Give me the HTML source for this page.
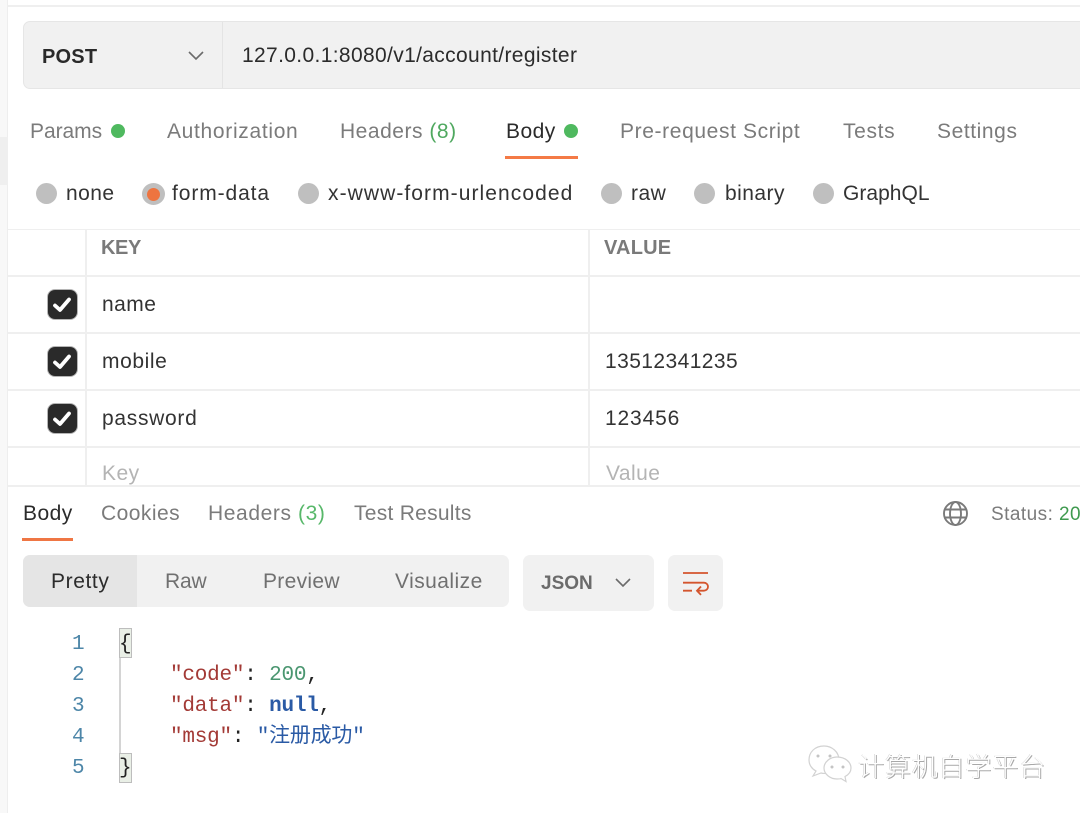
<!DOCTYPE html>
<html><head><meta charset="utf-8">
<style>
html,body{margin:0;padding:0;background:#fff}
#p{position:relative;width:1080px;height:813px;overflow:hidden;background:#fff;font-family:"Liberation Sans","Noto Sans CJK SC",sans-serif;font-size:21px;color:#2b2b2b;filter:blur(.35px)}
#p div,#p span.t{position:absolute}
.t{white-space:nowrap;line-height:26px;height:26px;letter-spacing:.45px}
.g{color:#7b7b7b}
.k{color:#333}
.r{width:21px;height:21px;border-radius:50%;background:#bfbfbf}
.l{background:#efefef}
.c{width:29px;height:29px;border-radius:7px;background:#2a2a2a;box-shadow:0 0 0 1px #b5b5b5}
.m{font-family:"Liberation Mono","Noto Sans CJK SC",monospace;font-size:21px;line-height:26px;height:26px;white-space:nowrap;letter-spacing:-.22px}
.n{color:#4d86a8;font-size:21px;letter-spacing:0}
</style></head><body>
<div id="p">
<!-- sidebar -->
<div style="left:0;top:0;width:8px;height:813px;background:#f8f8f8"></div>
<div style="left:7px;top:0;width:1px;height:813px;background:#eee"></div>
<div style="left:0;top:137px;width:8px;height:48px;background:#efefef"></div>
<div class="l" style="left:8px;top:5px;width:1072px;height:2px"></div>
<!-- URL bar -->
<div style="left:23px;top:21px;width:1070px;height:68px;background:#f1f1f1;border:1px solid #e6e6e6;border-radius:7px;box-sizing:border-box"></div>
<div style="left:222px;top:22px;width:1px;height:66px;background:#e4e4e4"></div>
<span class="t" style="left:42px;top:44px;font-weight:bold;font-size:20px;color:#2a2a2a;letter-spacing:.2px">POST</span>
<svg style="position:absolute;left:187px;top:50px" width="18" height="12" viewBox="0 0 18 12"><path d="M2 2l7 7 7-7" fill="none" stroke="#6b6b6b" stroke-width="1.6"/></svg>
<span class="t" style="left:242px;top:43px;color:#2b2b2b;letter-spacing:.35px">127.0.0.1:8080/v1/account/register</span>
<!-- tabs -->
<span class="t g" style="left:30px;top:119px;letter-spacing:-.05px">Params</span>
<div style="left:111px;top:124px;width:14px;height:14px;border-radius:50%;background:#4fb95f"></div>
<span class="t g" style="left:167px;top:119px;letter-spacing:.68px">Authorization</span>
<span class="t g" style="left:340px;top:119px;letter-spacing:.52px">Headers <span style="color:#4fa85f">(8)</span></span>
<span class="t" style="left:506px;top:119px;color:#2b2b2b">Body</span>
<div style="left:564px;top:124px;width:14px;height:14px;border-radius:50%;background:#4fb95f"></div>
<div style="left:505px;top:156px;width:73px;height:3px;background:#f47a46"></div>
<span class="t g" style="left:620px;top:119px;letter-spacing:.62px">Pre-request Script</span>
<span class="t g" style="left:843px;top:119px;letter-spacing:.65px">Tests</span>
<span class="t g" style="left:937px;top:119px;letter-spacing:.58px">Settings</span>
<!-- radios -->
<div class="r" style="left:36px;top:183px"></div>
<span class="t k" style="left:66px;top:181px">none</span>
<div class="r" style="left:142px;top:183px;width:23px;height:22px"></div>
<div style="left:147px;top:188px;width:13px;height:13px;border-radius:50%;background:#ee7440"></div>
<span class="t k" style="left:172px;top:181px;letter-spacing:.9px">form-data</span>
<div class="r" style="left:298px;top:183px"></div>
<span class="t k" style="left:328px;top:181px;letter-spacing:1.07px">x-www-form-urlencoded</span>
<div class="r" style="left:601px;top:183px"></div>
<span class="t k" style="left:631px;top:181px">raw</span>
<div class="r" style="left:694px;top:183px"></div>
<span class="t k" style="left:725px;top:181px">binary</span>
<div class="r" style="left:813px;top:183px"></div>
<span class="t k" style="left:843px;top:181px;letter-spacing:.02px">GraphQL</span>
<!-- table -->
<div class="l" style="left:8px;top:229px;width:1072px;height:1px"></div>
<div class="l" style="left:8px;top:275px;width:1072px;height:2px"></div>
<div class="l" style="left:8px;top:332px;width:1072px;height:2px"></div>
<div class="l" style="left:8px;top:389px;width:1072px;height:2px"></div>
<div class="l" style="left:8px;top:446px;width:1072px;height:2px"></div>
<div class="l" style="left:8px;top:485px;width:1072px;height:2px"></div>
<div class="l" style="left:85px;top:230px;width:2px;height:255px"></div>
<div class="l" style="left:588px;top:230px;width:2px;height:255px"></div>
<span class="t" style="left:101px;top:235px;font-weight:bold;font-size:20px;color:#7a7a7a;letter-spacing:-.4px">KEY</span>
<span class="t" style="left:604px;top:235px;font-weight:bold;font-size:20px;color:#7a7a7a;letter-spacing:.2px">VALUE</span>
<div class="c" style="left:48px;top:290px"></div>
<svg style="position:absolute;left:47px;top:290px" width="30" height="30" viewBox="0 0 30 30"><path d="M8 15.500l5 4.500L22 9.500" fill="none" stroke="#fff" stroke-width="3.800" stroke-linecap="round" stroke-linejoin="round"/></svg>
<div class="c" style="left:48px;top:347px"></div>
<svg style="position:absolute;left:47px;top:347px" width="30" height="30" viewBox="0 0 30 30"><path d="M8 15.500l5 4.500L22 9.500" fill="none" stroke="#fff" stroke-width="3.800" stroke-linecap="round" stroke-linejoin="round"/></svg>
<div class="c" style="left:48px;top:404px"></div>
<svg style="position:absolute;left:47px;top:404px" width="30" height="30" viewBox="0 0 30 30"><path d="M8 15.500l5 4.500L22 9.500" fill="none" stroke="#fff" stroke-width="3.800" stroke-linecap="round" stroke-linejoin="round"/></svg>
<span class="t k" style="left:102px;top:292px">name</span>
<span class="t k" style="left:102px;top:349px;letter-spacing:.6px">mobile</span>
<span class="t k" style="left:102px;top:406px;letter-spacing:.7px">password</span>
<span class="t k" style="left:605px;top:349px;letter-spacing:.42px">13512341235</span>
<span class="t k" style="left:605px;top:406px;letter-spacing:.85px">123456</span>
<span class="t" style="left:102px;top:461px;color:#b4b4b4">Key</span>
<span class="t" style="left:606px;top:461px;color:#b4b4b4">Value</span>
<!-- response tabs -->
<span class="t" style="left:23px;top:501px;color:#2b2b2b">Body</span>
<div style="left:22px;top:538px;width:51px;height:3px;background:#ef7644"></div>
<span class="t g" style="left:101px;top:501px">Cookies</span>
<span class="t g" style="left:208px;top:501px;letter-spacing:.6px">Headers <span style="color:#58b86a">(3)</span></span>
<span class="t g" style="left:354px;top:501px;letter-spacing:.27px">Test Results</span>
<svg style="position:absolute;left:942px;top:500px" width="27" height="27" viewBox="0 0 27 27" fill="none" stroke="#7a7a7a" stroke-width="1.9"><circle cx="13.500" cy="13.500" r="11.500"/><ellipse cx="13.500" cy="13.500" rx="5.500" ry="11.500"/><path d="M3.500 9.500h20M3.500 17.500h20"/></svg>
<span class="t g" style="left:991px;top:502px;font-size:19px">Status: <span style="color:#3f9a4f">200 OK</span></span>
<!-- view tabs -->
<div style="left:23px;top:555px;width:486px;height:52px;background:#f1f1f1;border-radius:7px"></div>
<div style="left:23px;top:555px;width:114px;height:52px;background:#e5e5e5;border-radius:7px 0 0 7px"></div>
<span class="t" style="left:51px;top:569px;color:#2b2b2b;letter-spacing:.6px">Pretty</span>
<span class="t g" style="left:165px;top:569px;color:#707070;letter-spacing:-.2px">Raw</span>
<span class="t g" style="left:263px;top:569px;color:#707070;letter-spacing:.3px">Preview</span>
<span class="t g" style="left:395px;top:569px;color:#707070">Visualize</span>
<div style="left:523px;top:555px;width:131px;height:56px;background:#f1f1f1;border-radius:7px"></div>
<span class="t" style="left:541px;top:571px;font-weight:bold;font-size:19px;letter-spacing:0;color:#6b6b6b">JSON</span>
<svg style="position:absolute;left:614px;top:577px" width="18" height="12" viewBox="0 0 18 12"><path d="M2 2l7 7 7-7" fill="none" stroke="#6b6b6b" stroke-width="1.6"/></svg>
<div style="left:668px;top:555px;width:55px;height:56px;background:#f1f1f1;border-radius:7px"></div>
<svg style="position:absolute;left:680px;top:568px" width="32" height="32" viewBox="0 0 32 32" fill="none" stroke="#d4552e" stroke-width="1.800"><path d="M3 5h25M3 14.700h21a4 4 0 0 1 0 8h-7M3 22.700h9M21 18.500l-4 4.200 4 4.200"/></svg>
<!-- code -->
<div style="left:119px;top:628px;width:13px;height:30px;background:#e9efe6;border:1px solid #bdbdbd;box-sizing:border-box"></div>
<div style="left:119px;top:753px;width:13px;height:30px;background:#e9efe6;border:1px solid #bdbdbd;box-sizing:border-box"></div>
<div style="left:119px;top:658px;width:2px;height:95px;background:#d4d4d4"></div>
<span class="t m n" style="left:72px;top:632px">1</span>
<span class="t m n" style="left:72px;top:663px">2</span>
<span class="t m n" style="left:72px;top:694px">3</span>
<span class="t m n" style="left:72px;top:725px">4</span>
<span class="t m n" style="left:72px;top:756px">5</span>
<span class="t m" style="left:119px;top:632px;color:#222">{</span>
<span class="t m" style="left:119px;top:756px;color:#222">}</span>
<span class="t m" style="left:170px;top:663px"><span style="color:#a33a36">"code"</span><span style="color:#222">: </span><span style="color:#4a9670">200</span><span style="color:#222">,</span></span>
<span class="t m" style="left:170px;top:694px"><span style="color:#a33a36">"data"</span><span style="color:#222">: </span><b style="color:#2a5aa5">null</b><span style="color:#222">,</span></span>
<span class="t m" style="left:170px;top:725px"><span style="color:#a33a36">"msg"</span><span style="color:#222">: </span><span style="color:#2a5aa5">"注册成功"</span></span>
<!-- watermark -->
<svg style="position:absolute;left:806px;top:743px" width="48" height="42" viewBox="0 0 48 42" fill="#fff" stroke="#d2d2d2" stroke-width="1.200"><path d="M18 3C9 3 3 9 3 17c0 5 3 9 7 11l-3 5 8-3c2 .5 5 .5 7 0 6-1 11-6 11-13 0-8-7-14-15-14z"/><path d="M31 14c-7 0-13 5-13 11s6 11 13 11c2 0 3 0 4-.5l5 3-1-5c4-2 6-5 6-8.500 0-6-6-11-14-11z"/><g fill="#c4c4c4" stroke="none"><circle cx="12" cy="13" r="1.500"/><circle cx="24" cy="13" r="1.500"/><circle cx="26" cy="24" r="1.500"/><circle cx="37" cy="24" r="1.500"/></g></svg>
<span class="t" style="left:858px;top:749px;height:34px;line-height:34px;font-size:26px;letter-spacing:.85px;color:#fff;font-family:'Noto Sans CJK SC',sans-serif;font-weight:300;text-shadow:1px 1px 0 #a8a8a8,-.5px 0 0 #c8c8c8">计算机自学平台</span>
</div>
</body></html>
